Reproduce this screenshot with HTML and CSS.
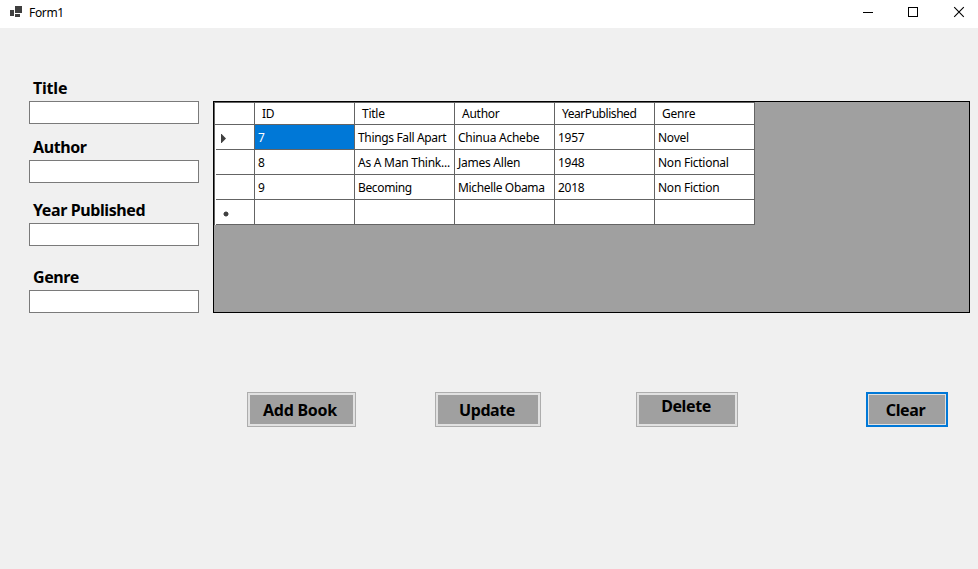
FILE: index.html
```html
<!DOCTYPE html>
<html lang="en">
<head>
<meta charset="utf-8">
<title>Form1</title>
<link rel="stylesheet" href="styles.css">
</head>
<body>
<header class="titlebar">
  <svg class="app-icon" width="12" height="12" viewBox="0 0 12 12" shape-rendering="crispEdges"><path fill="#3f3f3f" d="M5 0h7v7H5zM0 4h4v6H0zM5 8h5v3H5z"/></svg>
  <span class="caption">Form1</span>
  <svg class="win-buttons" width="130" height="28" viewBox="0 0 130 28"><path d="M15 12.5h10M60.500 7.500h9v9h-9z" fill="none" stroke="#000" shape-rendering="crispEdges"/><path d="M106.200 7.200l9.600 9.600M115.800 7.200l-9.600 9.600" fill="none" stroke="#000" stroke-width="1.100"/></svg>
</header>
<main>
  <div class="workspace">
    <form class="fields">
      <label class="field title"><span>Title</span><input type="text"></label>
      <label class="field author"><span>Author</span><input type="text"></label>
      <label class="field year"><span>Year Published</span><input type="text"></label>
      <label class="field genre"><span>Genre</span><input type="text"></label>
    </form>
    <section class="grid-panel">
      <div class="row head"><div></div><div>ID</div><div>Title</div><div>Author</div><div class="tight">YearPublished</div><div>Genre</div></div>
      <div class="row"><div class="mark"><svg width="5" height="9" viewBox="0 0 5 9"><path fill="#404040" d="M0 0h.6L5 4.500L.6 9H0z"/></svg></div><div class="selected">7</div><div class="snug">Things Fall Apart</div><div>Chinua Achebe</div><div>1957</div><div>Novel</div></div>
      <div class="row"><div></div><div>8</div><div>As A Man Think...</div><div>James Allen</div><div>1948</div><div>Non Fictional</div></div>
      <div class="row"><div></div><div>9</div><div class="snug">Becoming</div><div class="snug">Michelle Obama</div><div>2018</div><div>Non Fiction</div></div>
      <div class="row"><div class="mark new"><svg width="6" height="6" viewBox="0 0 6 6"><circle cx="3" cy="3" r="2.300" fill="#404040"/><path d="M3 0v6M0 3h6M1 1l4 4M5 1L1 5" stroke="#404040" stroke-width=".6"/></svg></div><div></div><div></div><div></div><div></div><div></div></div>
    </section>
  </div>
  <div class="actions">
    <button class="add">Add Book</button>
    <button class="update">Update</button>
    <button class="delete">Delete</button>
    <button class="clear">Clear</button>
  </div>
</main>
</body>
</html>
```
FILE: styles.css
```css
* { box-sizing: border-box; }
body {
  margin: 0;
  height: 569px;
  overflow: hidden;
  background: #f0f0f0;
  color: #000;
  font: 12px/16px "Noto Sans", sans-serif;
}
.titlebar { display: flex; height: 28px; background: #fff; }
.app-icon { margin: 6px 7px 0 10px; }
.caption { padding-top: 5px; letter-spacing: -0.35px; }
.win-buttons { margin-left: auto; }
.workspace { display: flex; padding: 50px 8px 0 29px; }
.fields { width: 170px; margin-right: 14px; }
.field { display: block; height: 46px; font-size: 16px; font-weight: 700; line-height: 20px; letter-spacing: -0.4px; }
.field span { display: block; height: 23px; padding-left: 4px; white-space: nowrap; }
.field input {
  display: block;
  width: 170px;
  height: 23px;
  padding: 0 4px;
  border: 1px solid #7a7a7a;
  background: #fff;
}
.title { letter-spacing: -0.2px; }
.author { margin-top: 13px; }
.year { margin-top: 17px; }
.genre { margin-top: 21px; }
.grid-panel {
  width: 757px;
  height: 212px;
  margin-top: 23px;
  border: 1px solid #000;
  background: #a0a0a0;
}
.row {
  display: grid;
  grid-template-columns: 40px repeat(5, 100px);
  width: 541px;
  height: 25px;
  border-left: 1px solid #646464;
}
.row > div {
  padding: 5px 0 0 3px;
  border-right: 1px solid #646464;
  border-bottom: 1px solid #646464;
  background: #fff;
  letter-spacing: -0.25px;
  white-space: nowrap;
}
.row > .snug { letter-spacing: -0.35px; }
.row > .tight { letter-spacing: -0.45px; }
.row > div:first-child { padding-left: 0; }
.row:not(.head) > div:first-child {
  border-bottom: 0;
  background:
    linear-gradient(#646464, #646464) 1px 100% / 100% 1px no-repeat,
    #fff;
}
.row.head { height: 23px; border-top: 1px solid #646464; }
.row.head > div { padding: 3px 0 0 7px; }
.row .selected { background: #0078d7; color: #fff; }
.mark svg { display: block; margin: 4px 0 0 6px; }
.mark.new svg { margin: 6px 0 0 8px; }
.actions { display: flex; padding: 79px 0 0 247px; }
button {
  height: 35px;
  padding: 0 3px 0 0;
  border: 1px solid #adadad;
  background: #a0a0a0;
  box-shadow: inset 0 0 0 2px #e1e1e1;
  color: #000;
  font: 700 16px/20px "Noto Sans", sans-serif;
  letter-spacing: -0.4px;
  white-space: nowrap;
}
.add { width: 109px; letter-spacing: -0.25px; }
.update { width: 106px; margin-left: 79px; padding-right: 2px; }
.delete { width: 102px; margin-left: 95px; padding: 0 2px 8px 0; }
.clear { width: 82px; margin-left: 128px; border: 2px solid #0078d7; box-shadow: inset 0 0 0 1px #e1e1e1; }
```
